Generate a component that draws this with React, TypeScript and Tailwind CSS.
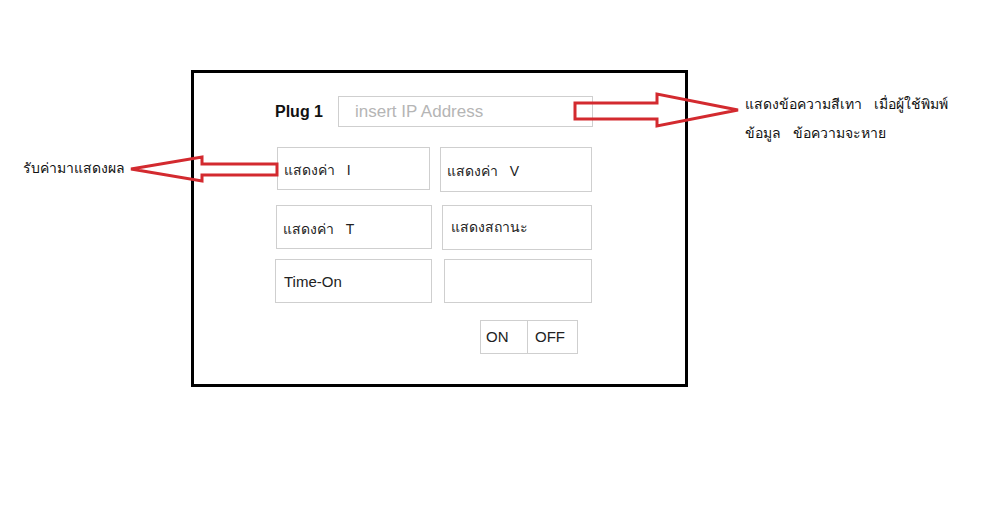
const font = { fontFamily: '"Liberation Sans", "Noto Sans", "DejaVu Sans", sans-serif' };

function Field({ label, className }: { label?: string; className: string }) {
  return (
    <div className={`flex items-center whitespace-pre border border-[#cfcfcf] bg-white pl-[6px] text-[14px] text-[#222] ${className}`}>
      {label}
    </div>
  );
}

function Arrows() {
  return (
    <svg className="pointer-events-none absolute left-0 top-0" width="1000" height="519" viewBox="0 0 1000 519">
      <g fill="none" stroke="#d32a2f" strokeWidth="3" strokeLinejoin="miter">
        <polygon points="575,103 657,103 657,94 738,110 657,126 657,119 575,119" />
        <polygon points="277,164 202,164 202,157 131,169 202,181 202,175 277,175" />
      </g>
    </svg>
  );
}

export default function App() {
  return (
    <div className="relative h-[519px] w-[1000px] overflow-hidden bg-white" style={font}>
      <div className="ml-[191px] mt-[70px] h-[317px] w-[497px] border-[3px] border-black">
        <div className="ml-[81px] mt-[23px] flex items-center">
          <span className="w-[63px] text-[16px] font-bold text-[#111]">Plug 1</span>
          <div className="flex h-[31px] w-[255px] items-center border border-[#cfcfcf] pl-[16px] text-[17px] text-[#b5b5b5]">
            insert IP Address
          </div>
        </div>

        <div className="ml-[83px] mt-[20px] flex gap-[10px]">
          <Field label="แสดงค่า   I" className="h-[43px] w-[153px] pt-[3px]" />
          <Field label="แสดงค่า   V" className="h-[45px] w-[152px] pt-[3px]" />
        </div>
        <div className="ml-[82px] mt-[13px] flex gap-[10px]">
          <Field label="แสดงค่า   T" className="h-[44px] w-[156px] pt-[4px]" />
          <Field label="แสดงสถานะ" className="h-[45px] w-[150px] pl-[8px]" />
        </div>
        <div className="ml-[81px] mt-[9px] flex gap-[12px]">
          <Field label="Time-On" className="h-[44px] w-[157px] pl-[8px] pt-[2px] text-[15px]" />
          <Field className="h-[44px] w-[148px]" />
        </div>

        <div className="ml-[286px] mt-[17px] flex h-[34px] text-[15px] text-[#222]">
          <div className="flex w-[48px] items-center border border-[#cfcfcf] pl-[5px]">ON</div>
          <div className="flex w-[50px] items-center border border-l-0 border-[#cfcfcf] pl-[7px]">OFF</div>
        </div>
      </div>

      <div className="absolute left-[745px] top-[90px] whitespace-pre text-[14px] leading-[29px] text-[#111]">
        <div>แสดงข้อความสีเทา   เมื่อผู้ใช้พิมพ์</div>
        <div>ข้อมูล   ข้อความจะหาย</div>
      </div>
      <div className="absolute left-[23px] top-[158px] text-[14px] leading-[20px] text-[#111]">รับค่ามาแสดงผล</div>

      <Arrows />
    </div>
  );
}
